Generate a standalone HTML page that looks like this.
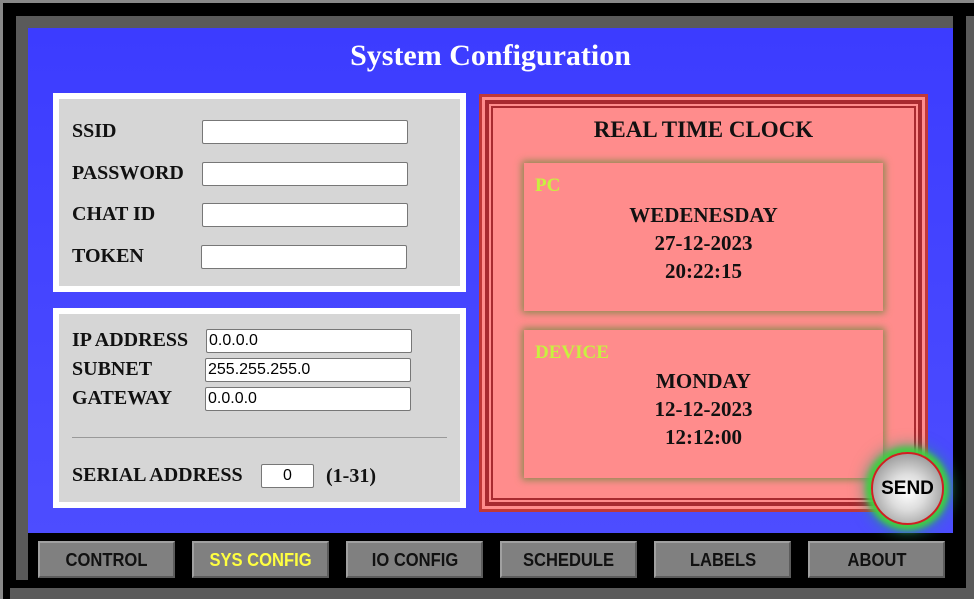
<!DOCTYPE html>
<html><head><meta charset="utf-8"><style>
*{margin:0;padding:0;box-sizing:border-box}
body{width:974px;height:599px;background:#000;position:relative;overflow:hidden;font-family:"Liberation Serif",serif}
.a{position:absolute}
.lbl{position:absolute;font-weight:bold;font-size:20px;line-height:22px;color:#111}
.inp{position:absolute;background:#fff;border:1px solid #777;border-radius:2px;height:24px;font-family:"Liberation Sans",sans-serif;font-size:16px;padding-left:2px;line-height:22px;color:#000}
.tab{position:absolute;top:541px;width:137px;height:37px;background:#808080;border:2px solid #5c5c5c;border-top-color:#a0a0a0;border-left-color:#a0a0a0;text-align:center;line-height:34px;font-family:"Liberation Sans",sans-serif;font-weight:bold;font-size:18px;color:#111}
.tab span{display:inline-block;transform:scaleX(0.92)}
.box{position:absolute;left:524px;width:359px;height:148px;background:#ff8c8c;box-shadow:0 0 7px 2px #8a8a50;text-align:center;font-weight:bold;font-size:21px;line-height:28px;color:#111}
.box .t{position:absolute;left:11px;top:13px;color:#c8f040;font-size:19px;line-height:20px}
</style></head><body>
<div class="a" style="left:0;top:0;width:974px;height:3px;background:#888"></div>
<div class="a" style="left:0;top:0;width:3px;height:599px;background:#888"></div>
<div class="a" style="left:16px;top:16px;width:937px;height:12px;background:#5a5a5a"></div>
<div class="a" style="left:16px;top:16px;width:12px;height:564px;background:#5a5a5a"></div>
<div class="a" style="left:966px;top:16px;width:8px;height:583px;background:#5a5a5a"></div>
<div class="a" style="left:10px;top:588px;width:964px;height:11px;background:#5a5a5a"></div>
<div class="a" style="left:28px;top:28px;width:925px;height:505px;background:linear-gradient(#3c3cff,#4d4dff)"></div>
<div class="a" style="left:28px;top:39px;width:925px;text-align:center;color:#fff;font-weight:bold;font-size:30px">System Configuration</div>

<div class="a" style="left:53px;top:93px;width:413px;height:199px;background:#fff;padding:6px"><div style="width:100%;height:100%;background:#d6d6d6"></div></div>
<div class="lbl" style="left:72px;top:120px">SSID</div>
<div class="lbl" style="left:72px;top:162px">PASSWORD</div>
<div class="lbl" style="left:72px;top:203px">CHAT ID</div>
<div class="lbl" style="left:72px;top:245px">TOKEN</div>
<div class="inp" style="left:202px;top:120px;width:206px"></div>
<div class="inp" style="left:202px;top:162px;width:206px"></div>
<div class="inp" style="left:202px;top:203px;width:206px"></div>
<div class="inp" style="left:201px;top:245px;width:206px"></div>

<div class="a" style="left:53px;top:308px;width:413px;height:200px;background:#fff;padding:6px"><div style="width:100%;height:100%;background:#d6d6d6"></div></div>
<div class="lbl" style="left:72px;top:329px">IP ADDRESS</div>
<div class="lbl" style="left:72px;top:358px">SUBNET</div>
<div class="lbl" style="left:72px;top:387px">GATEWAY</div>
<div class="inp" style="left:206px;top:329px;width:206px">0.0.0.0</div>
<div class="inp" style="left:205px;top:358px;width:206px">255.255.255.0</div>
<div class="inp" style="left:205px;top:387px;width:206px">0.0.0.0</div>
<div class="a" style="left:72px;top:437px;width:375px;height:1px;background:#999"></div>
<div class="lbl" style="left:72px;top:464px">SERIAL ADDRESS</div>
<div class="inp" style="left:261px;top:464px;width:53px;text-align:center;padding:0">0</div>
<div class="lbl" style="left:326px;top:465px">(1-31)</div>

<div class="a" style="left:479px;top:94px;width:449px;height:418px;background:#ff8c8c;border:3px solid #c03838"></div>
<div class="a" style="left:485px;top:100px;width:437px;height:406px;border:4px solid #a82a30"></div>
<div class="a" style="left:491px;top:106px;width:425px;height:394px;border:2px solid #a82a30"></div>
<div class="a" style="left:479px;top:117px;width:449px;text-align:center;font-weight:bold;font-size:23px;color:#111">REAL TIME CLOCK</div>
<div class="box" style="top:163px"><div class="t">PC</div><div style="padding-top:38px">WEDENESDAY<br>27-12-2023<br>20:22:15</div></div>
<div class="box" style="top:330px"><div class="t">DEVICE</div><div style="padding-top:37px">MONDAY<br>12-12-2023<br>12:12:00</div></div>

<div class="a" style="left:871px;top:452px;width:73px;height:73px;border-radius:50%;border:2px solid #d02020;background:radial-gradient(circle at 50% 55%,#fff 0%,#ddd 35%,#777 100%);box-shadow:0 0 6px 5px #40d040,0 0 14px 8px rgba(40,160,120,0.6);text-align:center;line-height:69px;font-family:'Liberation Sans',sans-serif;font-weight:bold;font-size:19px;color:#000">SEND</div>

<div class="tab" style="left:38px"><span>CONTROL</span></div>
<div class="tab" style="left:192px;color:#ffff40"><span>SYS CONFIG</span></div>
<div class="tab" style="left:346px"><span>IO CONFIG</span></div>
<div class="tab" style="left:500px"><span>SCHEDULE</span></div>
<div class="tab" style="left:654px"><span>LABELS</span></div>
<div class="tab" style="left:808px"><span>ABOUT</span></div>
</body></html>
